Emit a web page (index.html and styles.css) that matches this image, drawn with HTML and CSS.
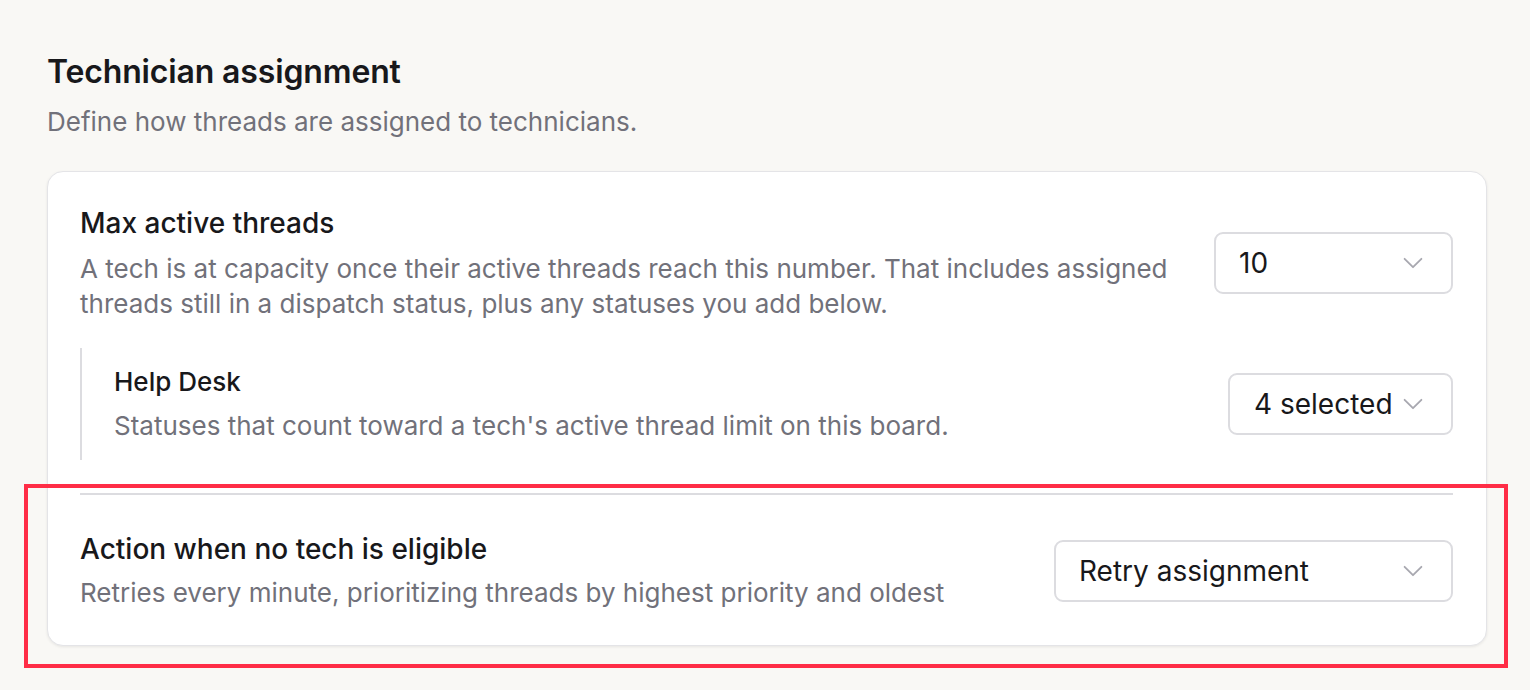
FILE: index.html
```html
<!DOCTYPE html>
<html lang="en">
<head>
    <meta charset="UTF-8">
    <meta name="viewport" content="width=device-width, initial-scale=1.0">
    <title>Technician assignment</title>
    <link rel="stylesheet" href="styles.css">
</head>
<body>
    <div class="page">
        <h1 class="section-title">Technician assignment</h1>
        <p class="section-desc">Define how threads are assigned to technicians.</p>

        <div class="card">
            <div class="setting-row">
                <div class="setting-text">
                    <div class="setting-label">Max active threads</div>
                    <div class="setting-help">A tech is at capacity once their active threads reach this number. That includes assigned threads still in a dispatch status, plus any statuses you add below.</div>
                </div>
                <div class="select select-num">
                    <span>10</span>
                    <svg class="chevron" viewBox="0 0 20 20"><path d="M4 7l6 6 6-6"/></svg>
                </div>
            </div>

            <div class="board-row">
                <div class="setting-text">
                    <div class="board-label">Help Desk</div>
                    <div class="board-help">Statuses that count toward a tech's active thread limit on this board.</div>
                </div>
                <div class="select select-multi">
                    <span>4 selected</span>
                    <svg class="chevron" viewBox="0 0 20 20"><path d="M4 7l6 6 6-6"/></svg>
                </div>
            </div>

            <hr class="divider">

            <div class="setting-row last">
                <div class="setting-text">
                    <div class="setting-label">Action when no tech is eligible</div>
                    <div class="setting-help">Retries every minute, prioritizing threads by highest priority and oldest</div>
                </div>
                <div class="select select-wide">
                    <span>Retry assignment</span>
                    <svg class="chevron" viewBox="0 0 20 20"><path d="M4 7l6 6 6-6"/></svg>
                </div>
            </div>
        </div>

        <!-- highlight box from the screenshot annotation -->
        <div class="highlight"></div>
    </div>
</body>
</html>
```

FILE: styles.css
```css
* {
    box-sizing: border-box;
}

body {
    margin: 0;
    background-color: #f9f8f5;
    font-family: Inter, "Noto Sans", sans-serif;
    color: #18181b;
}

.page {
    position: relative;
    padding: 53px 43px 0 47px;
    height: 690px;
}

.section-title {
    margin: 0;
    font-size: 32px;
    line-height: 38px;
    font-weight: 600;
    letter-spacing: -0.15px;
}

.section-desc {
    margin: 14px 0 0;
    font-size: 26px;
    line-height: 34px;
    color: #71717a;
}

.card {
    margin-top: 32px;
    background-color: #fff;
    border: 1px solid #e4e4e7;
    border-radius: 16px;
    box-shadow: 0 1px 3px rgba(0, 0, 0, 0.08);
    padding: 33px 33px 35px 32px;
}

.setting-row {
    display: flex;
    align-items: center;
    justify-content: space-between;
    gap: 40px;
}

.setting-text {
    flex: 1;
}

.setting-label {
    font-size: 28px;
    line-height: 36px;
    font-weight: 500;
}

.setting-help {
    margin-top: 10px;
    font-size: 26px;
    line-height: 35px;
    color: #71717a;
    max-width: 1100px;
}

.setting-row.last .setting-help {
    margin-top: 8px;
}

.board-row {
    display: flex;
    align-items: center;
    justify-content: space-between;
    margin-top: 27px;
    padding: 18px 0 18px 32px;
    border-left: 2px solid #dcdce0;
}

.board-label {
    font-size: 26px;
    line-height: 32px;
    font-weight: 500;
}

.board-help {
    margin-top: 12px;
    font-size: 26px;
    line-height: 32px;
    color: #71717a;
}

.divider {
    margin: 33px 0 36px;
    border: none;
    border-top: 2px solid #dcdce0;
}

.select {
    display: flex;
    align-items: center;
    justify-content: space-between;
    height: 62px;
    padding: 0 24px 0 23px;
    border: 2px solid #dcdce0;
    border-radius: 9px;
    background-color: #fff;
    font-size: 28px;
    color: #18181b;
    white-space: nowrap;
    flex-shrink: 0;
}

.select-num {
    width: 239px;
}

.select-multi {
    width: 225px;
    justify-content: flex-start;
    gap: 6px;
    padding: 0 20px 0 24px;
}

.select-wide {
    width: 399px;
}

.chevron {
    width: 28px;
    height: 28px;
    flex-shrink: 0;
    fill: none;
    stroke: #a8a8b0;
    stroke-width: 1.3;
    stroke-linecap: round;
    stroke-linejoin: round;
}

.highlight {
    position: absolute;
    left: 24px;
    top: 484px;
    width: 1484px;
    height: 184px;
    border: 4px solid #ff2d46;
    pointer-events: none;
}
```
